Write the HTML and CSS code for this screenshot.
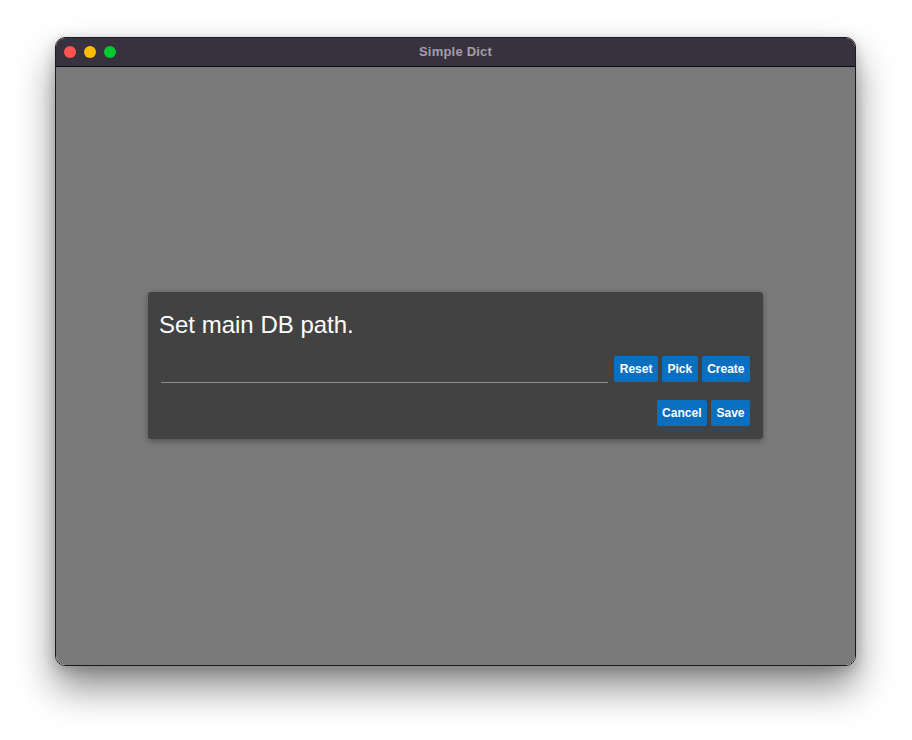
FILE: index.html
```html
<!DOCTYPE html>
<html>
<head>
<meta charset="utf-8">
<link rel="stylesheet" href="styles.css">
</head>
<body>
<div class="window">
  <div class="titlebar">
    <div class="lights">
      <span class="light red"></span>
      <span class="light yellow"></span>
      <span class="light green"></span>
    </div>
    <div class="title">Simple Dict</div>
  </div>
  <div class="content">
    <div class="dialog">
      <div class="dialog-title">Set main DB path.</div>
      <div class="path-row">
        <div class="path-input"></div>
        <div class="btn-group">
          <button class="btn">Reset</button>
          <button class="btn">Pick</button>
          <button class="btn">Create</button>
        </div>
      </div>
      <div class="actions">
        <button class="btn">Cancel</button>
        <button class="btn">Save</button>
      </div>
    </div>
  </div>
</div>
</body>
</html>
```
FILE: styles.css
```css
html, body {
  margin: 0;
  padding: 0;
  background: #ffffff;
}
body {
  width: 912px;
  height: 740px;
  padding: 37px 0 0 55px;
  box-sizing: border-box;
  font-family: "Liberation Sans", Arial, sans-serif;
}
.window {
  width: 801px;
  height: 629px;
  box-sizing: border-box;
  border: 1px solid #1c1a1f;
  border-radius: 10px;
  overflow: hidden;
  display: flex;
  flex-direction: column;
  box-shadow: 0 22px 38px rgba(0, 0, 0, 0.45), 0 4px 14px rgba(0, 0, 0, 0.2);
}
.titlebar {
  height: 29px;
  flex: none;
  box-sizing: border-box;
  background: #38323f;
  border-bottom: 1px solid #0e0d10;
  position: relative;
  display: flex;
  align-items: center;
  justify-content: center;
}
.lights {
  position: absolute;
  left: 8px;
  top: 8px;
  display: flex;
  gap: 8px;
}
.light {
  width: 12px;
  height: 12px;
  border-radius: 50%;
  display: block;
}
.red { background: #ff5450; }
.yellow { background: #ffbd00; }
.green { background: #00c931; }
.title {
  color: #a49eab;
  font-weight: bold;
  font-size: 13px;
  letter-spacing: 0.2px;
  margin-top: -2px;
}
.content {
  flex: 1;
  background: #7a7a7a;
  display: flex;
  align-items: center;
  justify-content: center;
}
.dialog {
  width: 615px;
  box-sizing: border-box;
  background: #424242;
  border-radius: 3px;
  box-shadow: 0 2px 6px rgba(0, 0, 0, 0.35);
  padding: 19px 13px 13px 11px;
  margin-top: -2px;
}
.dialog-title {
  color: #ffffff;
  font-size: 24px;
  line-height: 28px;
}
.path-row {
  display: flex;
  align-items: flex-end;
  margin-top: 17px;
  margin-left: 2px;
}
.path-input {
  flex: 1;
  height: 26px;
  border-bottom: 1px solid #8c8c8c;
  box-sizing: border-box;
  margin-right: 6px;
  margin-bottom: -1px;
}
.btn-group, .actions {
  display: flex;
  gap: 4px;
}
.actions {
  justify-content: flex-end;
  margin-top: 18px;
}
.btn {
  height: 26px;
  padding: 0 5.5px;
  border: none;
  border-radius: 2px;
  background: #0b6fbf;
  color: #ffffff;
  font-family: "Liberation Sans", Arial, sans-serif;
  font-weight: bold;
  font-size: 12px;
  line-height: 26px;
  cursor: pointer;
}
```
